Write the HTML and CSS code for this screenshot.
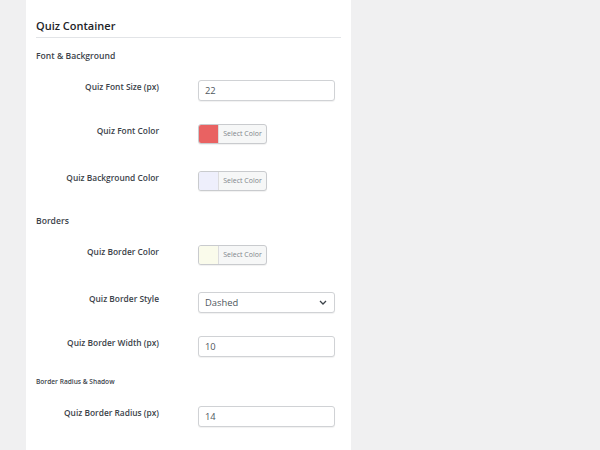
FILE: index.html
```html
<!DOCTYPE html>
<html lang="en">
<head>
  <meta charset="UTF-8">
  <title>Quiz Container</title>
  <link rel="stylesheet" href="styles.css">
</head>
<body>
  <div class="panel">
    <h2 class="titulo">Quiz Container</h2>

    <!-- Fuente y fondo -->
    <div class="seccion">
      <h3 class="subtitulo">Font &amp; Background</h3>
      <div class="fila">
        <label class="etiqueta">Quiz Font Size (px)</label>
        <input class="campo" type="text" value="22">
      </div>
      <div class="fila fila-color">
        <label class="etiqueta">Quiz Font Color</label>
        <button class="boton-color"><span class="muestra rojo"></span><span class="texto-color">Select Color</span></button>
      </div>
      <div class="fila fila-color">
        <label class="etiqueta">Quiz Background Color</label>
        <button class="boton-color"><span class="muestra lavanda"></span><span class="texto-color">Select Color</span></button>
      </div>
    </div>

    <!-- Bordes -->
    <div class="seccion">
      <h3 class="subtitulo">Borders</h3>
      <div class="fila fila-color">
        <label class="etiqueta">Quiz Border Color</label>
        <button class="boton-color"><span class="muestra marfil"></span><span class="texto-color">Select Color</span></button>
      </div>
      <div class="fila">
        <label class="etiqueta">Quiz Border Style</label>
        <div class="campo selector">
          <span>Dashed</span>
          <svg width="8" height="5" viewBox="0 0 8 5"><path d="M1 1l3 3 3-3" fill="none" stroke="#3c434a" stroke-width="1.3"/></svg>
        </div>
      </div>
      <div class="fila">
        <label class="etiqueta">Quiz Border Width (px)</label>
        <input class="campo" type="text" value="10">
      </div>
    </div>

    <!-- Radio y sombra -->
    <div class="seccion">
      <h4 class="subtitulo pequeno">Border Radius &amp; Shadow</h4>
      <div class="fila">
        <label class="etiqueta">Quiz Border Radius (px)</label>
        <input class="campo" type="text" value="14">
      </div>
    </div>
  </div>
</body>
</html>
```

FILE: styles.css
```css
/* Reset básico */
* {
  margin: 0;
  padding: 0;
  box-sizing: border-box;
}
body {
  font-family: "Open Sans", "Liberation Sans", sans-serif;
  background-color: #f0f0f1;
  color: #1d2327;
  width: 600px;
  height: 450px;
  overflow: hidden;
  padding-left: 26px;
}
/* Panel blanco de ajustes */
.panel {
  width: 325px;
  height: 450px;
  background: #fff;
  padding: 17px 10px 0;
}
.titulo {
  font-size: 11px;
  font-weight: 600;
  line-height: 18px;
  padding-bottom: 2px;
  border-bottom: 1px solid #e2e4e7;
  color: #1d2327;
}
.seccion {
  margin-top: 11px;
}
.seccion + .seccion {
  margin-top: 23px;
}
.seccion:last-child {
  margin-top: 19px;
}
.subtitulo {
  font-size: 8.6px;
  font-weight: 600;
  line-height: 14px;
  color: #3c434a;
  margin-bottom: 17px;
}
.subtitulo.pequeno {
  font-size: 6.6px;
  line-height: 12px;
  margin-bottom: 18px;
}
/* Filas de la tabla del formulario */
.fila {
  display: flex;
  align-items: flex-start;
  margin-bottom: 23px;
}
.fila-color {
  margin-bottom: 27px;
}
.seccion .fila:last-child {
  margin-bottom: 0;
}
.etiqueta {
  width: 123px;
  text-align: right;
  font-size: 8.4px;
  font-weight: 600;
  line-height: 14px;
  color: #3c434a;
  margin-right: 39px;
}
.campo {
  width: 137px;
  height: 21px;
  border: 1px solid #d0d2d5;
  border-radius: 3px;
  box-shadow: 0 1px 1px rgba(0, 0, 0, 0.06);
  font-family: inherit;
  font-size: 9.4px;
  color: #50575e;
  padding: 0 6px;
  background: #fff;
  outline: none;
}
.selector {
  display: flex;
  align-items: center;
  justify-content: space-between;
  padding-right: 7px;
}
/* Botón de selección de color */
.boton-color {
  display: flex;
  width: 69px;
  height: 20px;
  border: 1px solid #c9cbce;
  border-radius: 3px;
  background: #f6f7f7;
  overflow: hidden;
  font-family: inherit;
  box-shadow: 0 1px 1px rgba(0, 0, 0, 0.06);
}
.muestra {
  width: 20px;
  height: 100%;
  border-right: 1px solid #dcdcde;
}
.rojo { background: #e96262; }
.lavanda { background: #eeeffc; }
.marfil { background: #fafbeb; }
.texto-color {
  flex: 1;
  font-size: 7px;
  line-height: 18px;
  color: #80858b;
  text-align: center;
}
```
